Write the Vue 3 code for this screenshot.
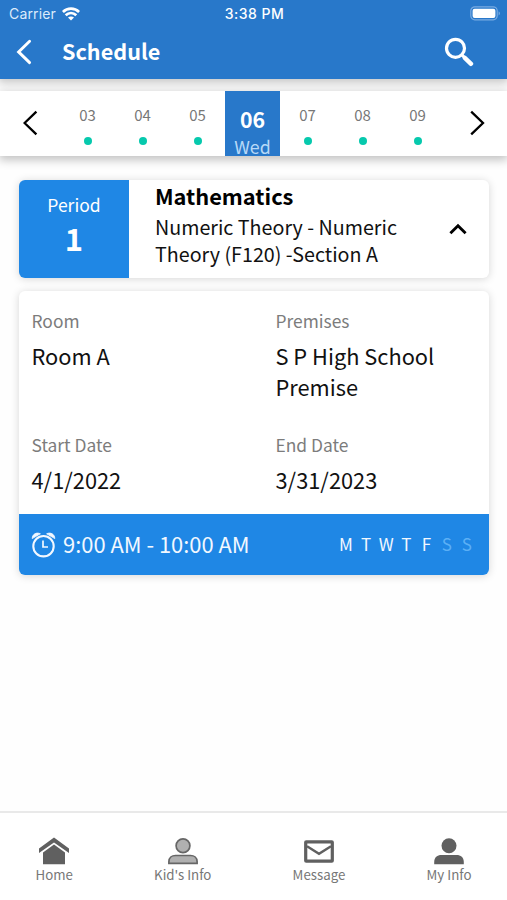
<template>
  <div class="screen">
    <header class="header">
      <div class="status-bar">
        <div class="carrier">
          <span>Carrier</span>
          <svg width="18" height="14" viewBox="0 0 18 14" fill="none" stroke="#fff" stroke-width="2.7">
            <path d="M0.9 5C5.4 0.6 12.6 0.6 17.1 5" />
            <path d="M3.7 8.3C6.8 5.3 11.2 5.3 14.3 8.3" />
            <path d="M9 13.6L6 10.6C7.6 9 10.4 9 12 10.6Z" fill="#fff" stroke="none" />
          </svg>
        </div>
        <span class="clock">3:38 PM</span>
        <svg class="battery" width="31" height="15" viewBox="0 0 31 15">
          <rect x="0.8" y="0.8" width="26.4" height="13" rx="4" fill="none" stroke="#79abe2" stroke-width="1.2" />
          <rect x="2.6" y="2.7" width="22.8" height="9.2" rx="2" fill="#fff" />
          <path d="M28.6 5.2C30.4 6 30.4 8.6 28.6 9.4Z" fill="#79abe2" />
        </svg>
      </div>
      <div class="title-bar">
        <svg class="back" width="16" height="26" viewBox="0 0 16 26" fill="none" stroke="#fff" stroke-width="2.9">
          <path d="M13.6 2.2L2.6 12.9L13.6 23.6" stroke-linecap="round" />
        </svg>
        <h1 class="title">Schedule</h1>
        <svg class="search" width="30" height="30" viewBox="0 0 30 30" fill="none" stroke="#fff">
          <circle cx="11.5" cy="11.3" r="9" stroke-width="3.2" />
          <path d="M18 18L20.5 20.5" stroke-width="3" />
          <path d="M20.8 20.8L27 26.8" stroke-width="4.4" stroke-linecap="round" />
        </svg>
      </div>
    </header>

    <section class="week">
      <button class="arrow prev">
        <svg width="16" height="26" viewBox="0 0 16 26" fill="none" stroke="#000" stroke-width="2.3">
          <path d="M13.4 1.6L1.6 13L13.4 24.4" />
        </svg>
      </button>
      <div
        v-for="day in days"
        :key="day.date"
        class="day"
        :class="{ active: day.date === selectedDate }"
        @click="selectedDate = day.date"
      >
        <span class="date">{{ day.date }}</span>
        <span v-if="day.date === selectedDate" class="weekday">{{ day.name }}</span>
        <span v-else class="dot"></span>
      </div>
      <button class="arrow next">
        <svg width="16" height="26" viewBox="0 0 16 26" fill="none" stroke="#000" stroke-width="2.3">
          <path d="M2.2 1.6L14 13L2.2 24.4" />
        </svg>
      </button>
    </section>

    <main class="content">
      <div class="card subject" @click="expanded = !expanded">
        <div class="period">
          <span class="period-label">Period</span>
          <span class="period-number">1</span>
        </div>
        <div class="subject-text">
          <h2>Mathematics</h2>
          <p>Numeric Theory - Numeric<br />Theory (F120) -Section A</p>
        </div>
        <svg class="toggle" :class="{ closed: !expanded }" width="18" height="12" viewBox="0 0 18 12" fill="none" stroke="#000" stroke-width="2.9">
          <path d="M1.4 10.2L9 2.8L16.6 10.2" />
        </svg>
      </div>

      <div v-if="expanded" class="card details">
        <div class="fields">
          <div v-for="field in fields" :key="field.label" class="field">
            <div class="label">{{ field.label }}</div>
            <div class="value">{{ field.value }}</div>
          </div>
        </div>
        <div class="time-bar">
          <svg width="25" height="26" viewBox="0 0 25 26" fill="none" stroke="#f2f8ff">
            <circle cx="12.5" cy="14.2" r="10.2" stroke-width="2.1" />
            <path d="M12 8.6V15H17" stroke-width="1.7" />
            <path d="M1.2 6.6C1.2 2.2 5.6 -0.2 9.4 1.8Z" fill="#f2f8ff" stroke-width="0.8" />
            <path d="M23.8 6.6C23.8 2.2 19.4 -0.2 15.6 1.8Z" fill="#f2f8ff" stroke-width="0.8" />
          </svg>
          <span class="time">9:00 AM - 10:00 AM</span>
          <div class="weekdays">
            <span v-for="(d, i) in weekdays" :key="i" :class="{ off: !d.on }">{{ d.letter }}</span>
          </div>
        </div>
      </div>
    </main>

    <nav class="tabs">
      <a class="tab home">
        <svg width="30" height="28" viewBox="0 0 30 28" fill="#606060">
          <path d="M15 0.6L30 11.6V16L15 5.4L0 16V11.6Z" />
          <path d="M15 7.6L26 15.4V27.2H4V15.4Z" />
        </svg>
        <span>Home</span>
      </a>
      <a class="tab kids">
        <svg width="30" height="28" viewBox="0 0 30 28" fill="#b0b0b0" stroke="#666" stroke-width="1.7">
          <circle cx="15" cy="8.7" r="6.9" />
          <path d="M0.9 26.4V24.5C0.9 20.8 3.8 18.5 7.5 18.5H22.5C26.2 18.5 29.1 20.8 29.1 24.5V26.4Z" />
        </svg>
        <span>Kid's Info</span>
      </a>
      <a class="tab message">
        <svg width="30" height="28" viewBox="0 0 30 28" fill="none" stroke="#606060">
          <rect x="1.7" y="4.8" width="26.6" height="19.4" rx="0.5" stroke-width="3.2" />
          <path d="M3 9.2L15 16.8L27 9.2" stroke-width="2.4" />
        </svg>
        <span>Message</span>
      </a>
      <a class="tab me">
        <svg width="30" height="28" viewBox="0 0 30 28" fill="#606060">
          <circle cx="15" cy="8.7" r="7.5" />
          <path d="M0.2 27.2V25C0.2 20.6 3.2 18 7.5 18H22.5C26.8 18 29.8 20.6 29.8 25V27.2Z" />
        </svg>
        <span>My Info</span>
      </a>
    </nav>
  </div>
</template>

<script setup>
import { ref } from 'vue';

const selectedDate = ref('06');
const expanded = ref(true);

const days = [
  { date: '03', name: 'Sun' },
  { date: '04', name: 'Mon' },
  { date: '05', name: 'Tue' },
  { date: '06', name: 'Wed' },
  { date: '07', name: 'Thu' },
  { date: '08', name: 'Fri' },
  { date: '09', name: 'Sat' },
];

const fields = [
  { label: 'Room', value: 'Room A' },
  { label: 'Premises', value: 'S P High School Premise' },
  { label: 'Start Date', value: '4/1/2022' },
  { label: 'End Date', value: '3/31/2023' },
];

const weekdays = [
  { letter: 'M', on: true },
  { letter: 'T', on: true },
  { letter: 'W', on: true },
  { letter: 'T', on: true },
  { letter: 'F', on: true },
  { letter: 'S', on: false },
  { letter: 'S', on: false },
];
</script>

<style>
body {
  margin: 0;
  background: #fff;
}
</style>

<style scoped>
.screen {
  display: flex;
  flex-direction: column;
  height: 900px;
  overflow: hidden;
  background: #fefefe;
  color: #111;
  font-family: "Noto Sans CJK SC", "Noto Sans", sans-serif;
}

.screen svg {
  display: block;
  flex-shrink: 0;
}

.header {
  flex-shrink: 0;
  height: 79px;
  background: #2878ca;
  color: #fff;
  box-shadow: 0 2px 9px 2px rgba(0, 0, 0, 0.22);
}

.status-bar {
  display: grid;
  grid-template-columns: 1fr auto 1fr;
  align-items: center;
  height: 27px;
  padding: 0 7px 0 9px;
  font-family: Inter, sans-serif;
  font-size: 14px;
}

.carrier {
  display: flex;
  align-items: center;
  gap: 6px;
  color: #dcebfb;
  letter-spacing: 0.15px;
}

.clock {
  font-weight: 500;
  font-size: 14px;
  letter-spacing: 0.5px;
}

.battery {
  justify-self: end;
  margin-right: -1px;
}

.title-bar {
  display: flex;
  align-items: center;
  height: 50px;
  padding: 0 33px 0 16px;
}

.title {
  flex: 1;
  margin: -2px 0 0 30px;
  font-size: 21.6px;
  line-height: 46px;
  font-weight: bold;
}

.week {
  display: flex;
  flex-shrink: 0;
  height: 65px;
  margin-top: 12px;
  background: #fff;
  box-shadow: 0 3px 9px 1px rgba(0, 0, 0, 0.24);
}

.arrow {
  display: flex;
  align-items: center;
  box-sizing: border-box;
  width: 60px;
  padding: 0 0 2px 22.5px;
  border: none;
  background: none;
}

.arrow.next {
  width: 62px;
  padding-left: 24px;
}

.day {
  display: flex;
  flex-direction: column;
  align-items: center;
  width: 55px;
  color: #777;
}

.date {
  margin-top: 12px;
  font-size: 15px;
  line-height: 24px;
}

.dot {
  width: 8px;
  height: 8px;
  margin-top: 10px;
  border-radius: 50%;
  background: #06c9ad;
}

.day.active {
  background: #2878ca;
  color: #fff;
}

.active .date {
  margin-top: 13px;
  font-size: 21.3px;
  line-height: 30px;
  font-weight: bold;
}

.weekday {
  margin-top: 2px;
  font-size: 17.8px;
  line-height: 20px;
  color: #b7d8f7;
}

.content {
  padding: 24px 18px 0 19px;
}

.card {
  border-radius: 6px;
  background: #fff;
  box-shadow: 0 1px 9px rgba(0, 0, 0, 0.16);
  overflow: hidden;
}

.subject {
  display: flex;
  height: 98px;
}

.period {
  display: flex;
  flex-direction: column;
  align-items: center;
  width: 110px;
  background: #1f87e5;
  color: #fff;
}

.period-label {
  margin-top: 13px;
  font-size: 17.5px;
  line-height: 24px;
}

.period-number {
  font-size: 31px;
  line-height: 42px;
  font-weight: bold;
}

.subject-text {
  flex: 1;
  padding-left: 26px;
}

.subject-text h2 {
  margin: 2px 0 0;
  font-size: 21.8px;
  line-height: 28px;
  font-weight: bold;
  color: #000;
}

.subject-text p {
  margin: 3px 0 0;
  font-size: 19.7px;
  line-height: 27px;
}

.toggle {
  margin: 43px 22px 0 0;
}

.toggle.closed {
  transform: rotate(180deg);
}

.details {
  margin-top: 13px;
}

.fields {
  display: grid;
  grid-template-columns: 244px 1fr;
  grid-template-rows: 124px 99px;
  padding-left: 12.5px;
}

.label {
  margin-top: 18px;
  font-size: 17.4px;
  line-height: 24px;
  color: #7c7c7c;
}

.value {
  width: 190px;
  margin-top: 7px;
  font-size: 21.8px;
  line-height: 31px;
}

.time-bar {
  display: flex;
  align-items: center;
  height: 61px;
  padding: 0 12px;
  background: #1f87e5;
  color: #f2f8ff;
}

.time {
  flex: 1;
  margin: -1px 0 0 7px;
  font-size: 21.9px;
  line-height: 30px;
}

.weekdays {
  display: flex;
  margin-top: -1px;
  font-size: 17px;
  line-height: 28px;
}

.weekdays span {
  width: 20.2px;
  text-align: center;
}

.weekdays .off {
  color: #5cb0f5;
}

.tabs {
  display: flex;
  justify-content: space-between;
  height: 89px;
  box-sizing: border-box;
  margin-top: auto;
  padding: 24px 35.5px 0;
  border-top: 2px solid #e9e9e9;
  background: #fff;
  color: #777;
  font-size: 13.3px;
  line-height: 19px;
}

.tab {
  display: flex;
  flex-direction: column;
  align-items: center;
}
</style>
